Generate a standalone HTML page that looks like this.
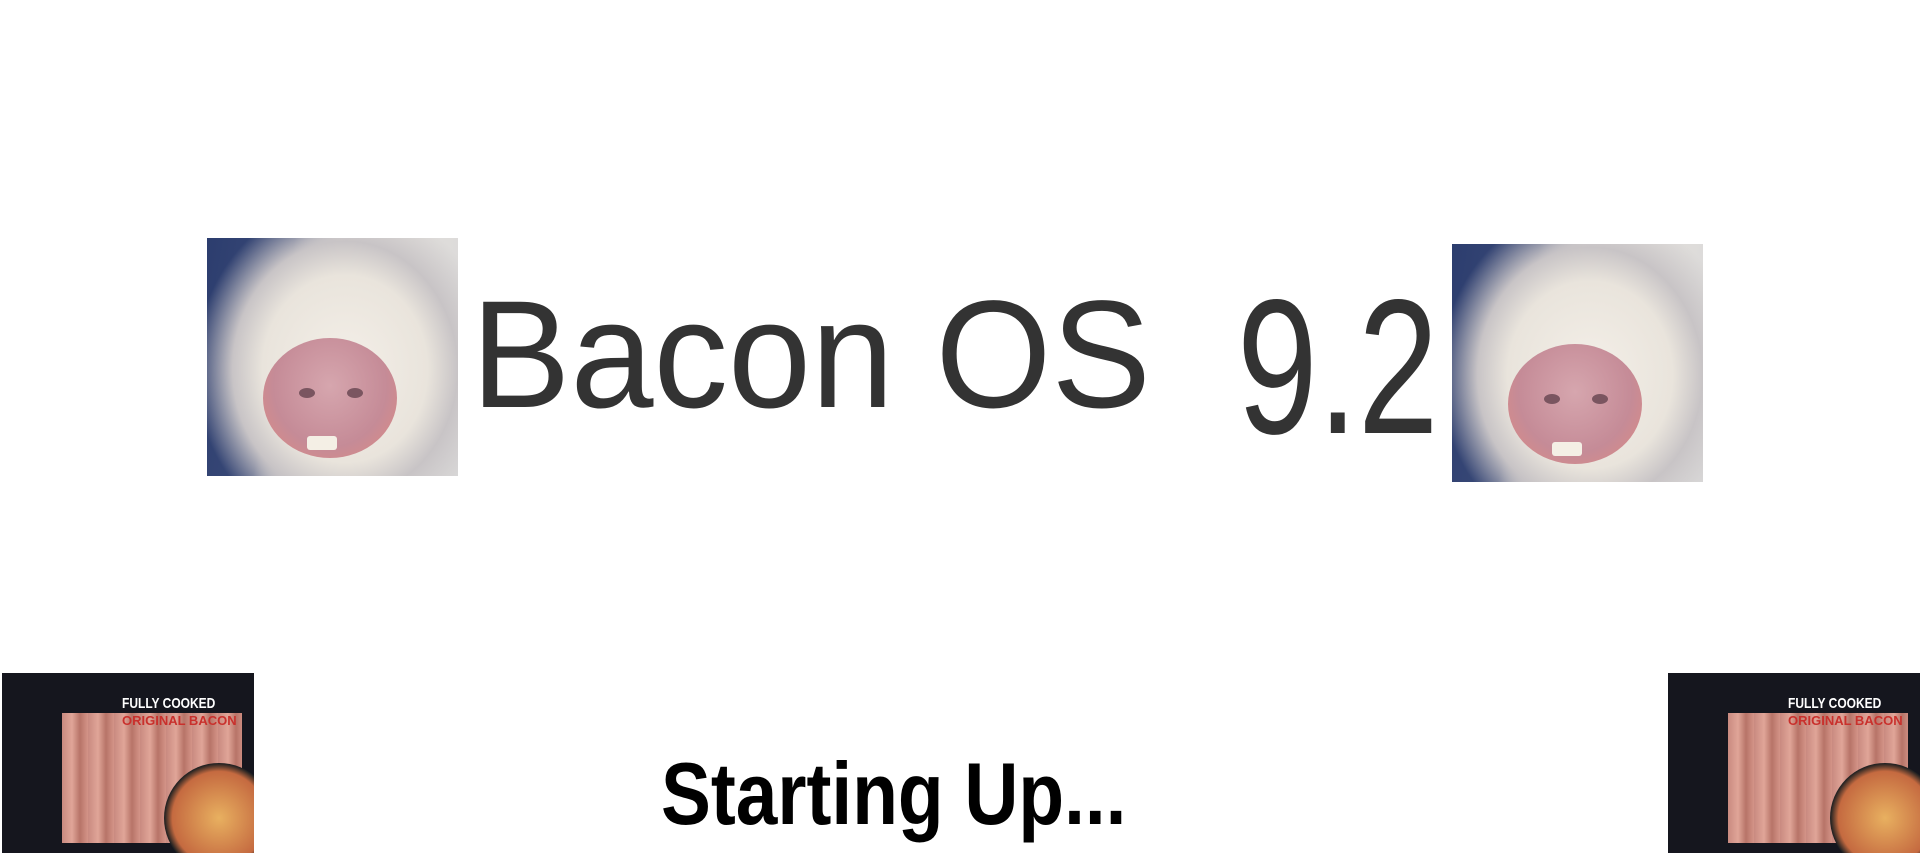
<!DOCTYPE html>
<html><head><meta charset="utf-8"><style>
html,body{margin:0;padding:0;background:#fff;width:1920px;height:855px;overflow:hidden;position:relative;font-family:"Liberation Sans",sans-serif}
.abs{position:absolute}
.pig{position:absolute;width:251px;height:238px;overflow:hidden;background:
radial-gradient(ellipse 150px 170px at 55% 55%,#f4efe8 0,#e9e4dc 55%,#c8c4c6 75%,transparent 100%),
linear-gradient(100deg,#2c3d6e 0,#3a4a78 30%,#e8e4de 45%,#d9d8d8 100%)}
.pig .snout{position:absolute;left:56px;top:100px;width:134px;height:120px;border-radius:50%;background:radial-gradient(ellipse at 50% 40%,#d6a6ae,#c58b97 60%,#e28a80 100%)}
.pig .n1,.pig .n2{position:absolute;width:16px;height:10px;border-radius:50%;background:#7a5560;top:150px}
.pig .teeth{position:absolute;left:100px;top:198px;width:30px;height:14px;background:#f4efe5;border-radius:3px}
.pack{position:absolute;width:252px;height:180px;overflow:hidden;background:#15161e}
.pack .bacon{position:absolute;left:60px;top:40px;width:180px;height:130px;background:repeating-linear-gradient(90deg,#c98a80 0,#e0a598 10px,#b77468 18px,#d49488 26px)}
.pack .lbl{position:absolute;left:120px;top:22px;color:#fff;font:bold 15px "Liberation Sans",sans-serif;transform:scaleX(.8);transform-origin:left}
.pack .red{position:absolute;left:120px;top:40px;color:#c9302c;font:bold 13px "Liberation Sans",sans-serif}
.pack .food{position:absolute;right:-20px;bottom:-20px;width:110px;height:110px;border-radius:50%;background:radial-gradient(circle,#e8b060,#c56a40 60%,#222 70%)}
</style></head><body>
<div class="pig" style="left:207px;top:238px"><div class="snout"></div><div class="n1" style="left:92px"></div><div class="n2" style="left:140px"></div><div class="teeth"></div></div>
<div class="pig" style="left:1452px;top:244px"><div class="snout"></div><div class="n1" style="left:92px"></div><div class="n2" style="left:140px"></div><div class="teeth"></div></div>

<div class="abs" style="left:471px;top:278px;font-size:153px;line-height:1;color:#333;white-space:nowrap;transform:scaleX(.975);transform-origin:left top">Bacon OS</div>
<div class="abs" style="left:1237px;top:271px;font-size:192px;line-height:1;color:#333;white-space:nowrap;transform:scaleX(.755);transform-origin:left top">9.2</div>

<div class="pack" style="left:2px;top:673px"><div class="bacon"></div><div class="food"></div><div class="lbl">FULLY COOKED</div><div class="red">ORIGINAL BACON</div></div>
<div class="pack" style="left:1668px;top:673px"><div class="bacon"></div><div class="food"></div><div class="lbl">FULLY COOKED</div><div class="red">ORIGINAL BACON</div></div>

<div class="abs" style="left:661px;top:750px;font-size:88px;font-weight:bold;line-height:1;color:#000;white-space:nowrap;transform:scaleX(.85);transform-origin:left top">Starting Up...</div>
</body></html>
